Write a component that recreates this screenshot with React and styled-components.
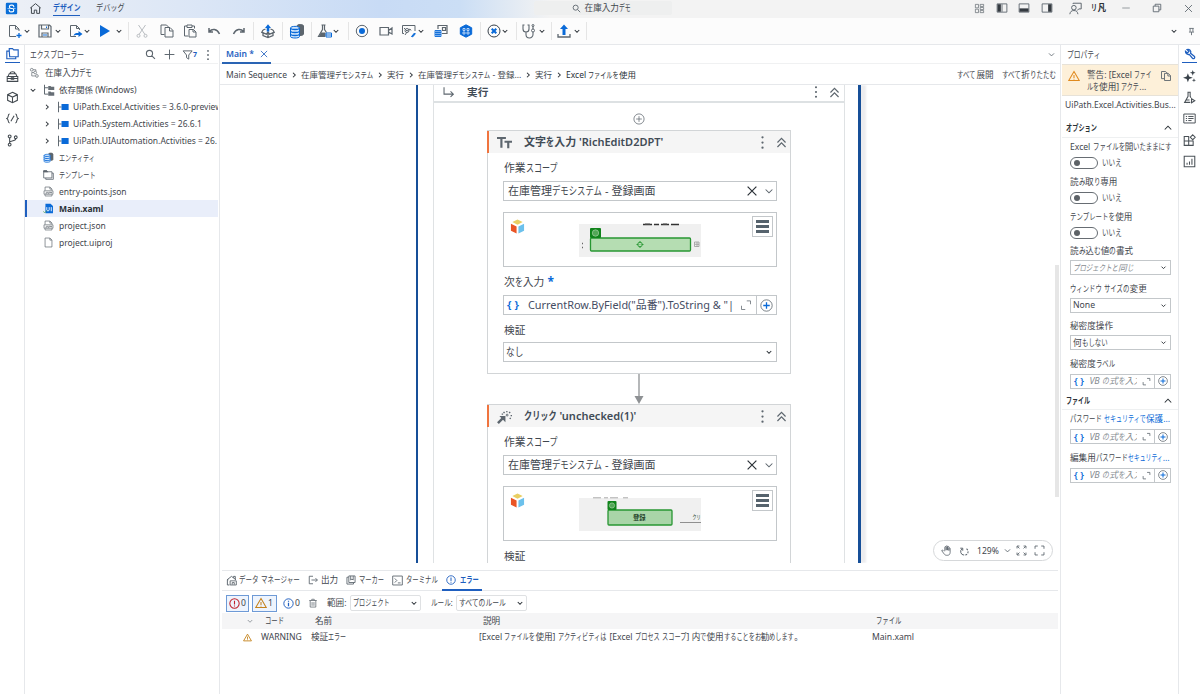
import React from 'react'
import styled, { createGlobalStyle } from 'styled-components'

const colors = {
	text: '#3f464d',
	dark: '#2b3137',
	grey: '#5d666e',
	blue: '#1f5fbf',
	bright: '#0a6ad8',
	line: '#e6e8eb',
	field: '#c3c7ca'
}

const GlobalStyle = createGlobalStyle`
	* {
		box-sizing: border-box;
	}

	body {
		margin: 0;
		overflow: hidden;
		background: #fff;
		color: ${colors.text};
		font: 9px/12px 'Noto Sans', 'Noto Sans CJK JP', sans-serif;
		white-space: nowrap;
	}

	svg {
		display: block;
		flex: none;
	}
`

/* Text */

const KanaRun = styled.span`
	display: inline-block;
	width: ${p => p.$n}em;
	margin-right: ${p => -p.$n * (1 - p.$k)}em;
	transform: scaleX(${p => p.$k});
	transform-origin: left;
`

const Label = styled.span`
	flex: none;
	white-space: pre;
	font-size: ${p => p.$size || 8.6}px;
	font-weight: ${p => p.$weight || 400};
	color: ${p => p.$color || 'inherit'};
	letter-spacing: ${p => p.$ls || 0}px;
	font-style: ${p => (p.$italic ? 'italic' : 'normal')};
	margin-left: ${p => p.$left || 0}px;
`

// kana are set narrower than kanji, the way UI fonts do it
const Text = ({ children, k = 0.74, ...rest }) => (
	<Label {...rest}>
		{children.split(/([\u3040-\u30ff]+)/).map((part, i) =>
			i % 2 ? (
				<KanaRun key={i} $n={part.length} $k={k}>
					{part}
				</KanaRun>
			) : (
				part
			)
		)}
	</Label>
)

/* Icons */

const Svg = styled.svg`
	width: ${p => p.$size || 16}px;
	height: ${p => p.$size || 16}px;
	fill: none;
	stroke: ${p => p.$color || colors.grey};
	stroke-width: ${p => p.$stroke || 1};
	margin-left: ${p => p.$left || 0}px;
	transform: ${p => (p.$turn ? `rotate(${p.$turn}deg)` : 'none')};
`

const B = colors.bright

const shapes = {
	logo: (
		<>
			<rect x="1" y="1" width="14" height="14" rx="1.5" fill="#0b6fd8" stroke="none" />
			<path d="M10.8 6.500V5.500a2 2 0 0 0-2-1.700H7.500a2.100 2.100 0 0 0 0 4.200h1.200a2.100 2.100 0 0 1 0 4.200H7.200a2 2 0 0 1-2-1.700V9.500" stroke="#fff" strokeWidth="1.4" />
			<path d="M3 8h3M10 8h3" stroke="#9fd0ff" />
		</>
	),
	home: <path d="M1.500 7.500 8 2l6.500 5.500M3 6.500V14h3.500v-4h3v4H13V6.500" />,
	chevron: <path d="M3.500 6 8 10.500 12.500 6" />,
	wide: <path d="M1.500 5 8 11.500 14.500 5" />,
	double: <path d="M3 8 8 3l5 5M3 13.500l5-5 5 5" />,
	close: <path d="m3 3 10 10M13 3 3 13" />,
	plus: <path d="M8 2v12M2 8h12" />,
	search: <path d="M6.500 2a4.500 4.500 0 1 0 0 9 4.500 4.500 0 0 0 0-9M10 10l4.500 4.500" />,
	dots: (
		<g fill={colors.grey} stroke="none">
			<circle cx="8" cy="2.500" r="1.200" />
			<circle cx="8" cy="8" r="1.200" />
			<circle cx="8" cy="13.500" r="1.200" />
		</g>
	),
	newFile: (
		<>
			<path d="M12 8V6L8.500 2.500H2.500v11H9M8.500 2.500V6H12" />
			<path d="M12 10v5M9.500 12.500h5" stroke={B} strokeWidth="1.300" />
		</>
	),
	save: (
		<>
			<path d="M2 2h10.500L14 3.500V14H2zM4.500 2v4h7V2M5 14v-4h6v4" strokeWidth="1.200" />
			<path d="M6 12h4M9.500 3.500V5" stroke={B} />
		</>
	),
	exportFile: (
		<>
			<path d="M11.500 7V5.500L8.500 2.500H2.500v11H8M8.500 2.500v3h3" />
			<path d="M5.500 13c.5-2.500 2-3 5-3V8l4 3-4 3v-2c-2.500-.2-4 0-5 1Z" fill={B} stroke="none" />
		</>
	),
	play: <path d="M3 2 13 8 3 14Z" fill={B} stroke="none" />,
	cut: (
		<g stroke="#b9bdc1">
			<path d="M4.500 2 11 11.500M11.500 2 5 11.500" />
			<circle cx="4.500" cy="12.800" r="1.500" />
			<circle cx="11.500" cy="12.800" r="1.500" />
		</g>
	),
	copy: <path d="M5.500 11.500h-3.500v-9.500h5.500l2 2M6 4.500h5l3 3V14H6zM10.500 4.500V8H14" />,
	paste: <path d="M6 13H2.500V3H5M10 3h2.500v2.500M5 2h5v2.500H5zM7 6.500h4.500L14 9v5H7zM11 6.500V9h3" />,
	undo: <path d="M3 5v4h4M3.300 8.700C6 5.500 11 5.500 13.500 11" strokeWidth="1.500" />,
	redo: <path d="M13 5v4H9M12.700 8.700C10 5.500 5 5.500 2.500 11" strokeWidth="1.500" />,
	box: (
		<>
			<path d="M3 9v3.500L8 14.500l5-2V9M8 10v4.500M3 7 1.800 9.300 6.500 11.200 8 9l1.500 2.200 4.700-1.900L13 7M3 7l2.500-1M13 7l-2.500-1" strokeWidth="1.300" />
			<path d="M8 1.300 11 5H9.300V8.500H6.700V5H5Z" fill={B} stroke="none" />
		</>
	),
	database: (
		<>
			<path d="M8 3c0-2 6.500-2 6.500 0v8c0 1-2 1.500-3.500 1.500" fill={colors.grey} />
			<path d="M1.500 5c0-2.200 9-2.200 9 0v8.500c0 2-9 2-9 0z" fill="#cfe4fb" stroke={B} />
			<path d="M1.500 5c0 2 9 2 9 0M1.500 8c0 2 9 2 9 0M1.500 11c0 2 9 2 9 0" stroke={B} strokeWidth="1.300" />
		</>
	),
	flask: (
		<>
			<path d="M4.500 2h4M5.500 2v4.500L1.500 13.500H8M7.500 2v4.500l2 3" strokeWidth="1.200" />
			<path d="M4 9.500h4.500v4H2Z" fill={colors.grey} stroke="none" />
			<path d="M9 10h5.500v4H9zM9 12h5.500" stroke={B} fill="#fff" />
		</>
	),
	record: (
		<>
			<circle cx="8" cy="8" r="5.700" />
			<circle cx="8" cy="8" r="3" fill={B} stroke="none" />
		</>
	),
	camera: <path d="M2 4.500h8.500v7.500H2zM10.500 7.500l3.500-2.500v6L10.500 9" strokeWidth="1.200" />,
	screen: (
		<>
			<path d="M3 10.500H1.500v-8h12.500V8M4 12l2-3M3 5l3 3 3-2 1 1.500" />
			<circle cx="6" cy="7.500" r="2" />
			<path d="m10.500 13.500 3-3.500.8.800-2.500 3Z" fill={B} stroke={B} />
		</>
	),
	scraping: (
		<>
			<path d="M5 6V2.500h9v8H9M9.500 4.500h3v3h-3z" strokeWidth="1.200" />
			<path d="M2 7.500h6v6H2zM2 9.500h6M2 11.500h6M4 7.500v6M6 7.500v6" fill="#cfe4fb" stroke={B} strokeWidth=".9" />
		</>
	),
	hex: (
		<>
			<path d="m8 1.800 5.700 3v6.400L8 14.200l-5.700-3V4.800Z" fill={B} stroke={B} strokeLinejoin="round" />
			<path d="M5 5.500h2v2H5zM9 5.500h2v2H9zM5 9h2v2H5zM9 9h2v2H9z" stroke="#d5e7fb" strokeWidth=".8" />
		</>
	),
	stop: (
		<>
			<circle cx="8" cy="8" r="6" stroke="#37404a" />
			<path d="m5.700 5.700 4.600 4.600m0-4.600-4.600 4.600" stroke={B} strokeWidth="2" />
		</>
	),
	steth: (
		<>
			<path d="M3.500 2H2v4a3 3 0 0 0 6 0V2H6.500M5 9v2.500a3.500 3.500 0 0 0 7 0V9M12 6V3" strokeWidth="1.100" />
			<circle cx="12" cy="7.500" r="1.500" />
			<circle cx="12" cy="2.500" r="1" />
		</>
	),
	upload: (
		<>
			<path d="M2 11v3h12V11" strokeWidth="1.300" />
			<path d="M8 1.500 12 6H9.500V12h-3V6H4Z" fill={B} stroke="none" />
		</>
	),
	layout: <path d="M2 2h4.500v5H2zM2 9h4.500v5H2zM9 2h5v3H9zM9 6.500h5v3H9zM9 11h5v3H9z" />,
	panelLeft: (
		<>
			<path d="M1.500 2.500h13v11h-13zM8 3v10" strokeWidth="1.200" />
			<path d="M2 3h4.500v10H2z" fill="#343a40" stroke="none" />
		</>
	),
	panelBottom: (
		<>
			<path d="M1.500 2.500h13v11h-13z" strokeWidth="1.200" />
			<path d="M2 8.500h12V13H2z" fill="#343a40" stroke="none" />
		</>
	),
	panelRight: (
		<>
			<path d="M1.500 2.500h13v11h-13z" strokeWidth="1.200" />
			<path d="M9.500 3H14v10H9.500z" fill="#343a40" stroke="none" />
		</>
	),
	feedback: (
		<>
			<circle cx="6" cy="7" r="2.800" />
			<path d="M1 15c.5-3 2-4.500 5-4.500s4.500 1.500 5 4.500M5 2.500V1.500h10v7h-3L10 10.500" />
		</>
	),
	minimize: <path d="M2 8h12" />,
	restore: <path d="M2 5h9v9H2zM5 5V2h9v9h-3" />,
	pin: <path d="M4 2.500h8M5.500 2.500v6M10.500 2.500v6M3.500 9h9M8 9v5.500" strokeWidth="1.500" />,
	folders: <path d="M4 4.500V2h4l1.500 1.500H15v8.500H4.500zM4 5H1v9.500h11V12.500" />,
	toolbox: <path d="M5 4.500c0-3 6-3 6 0M2.500 8 4 4.500h8L13.500 8M1.500 8h13v2.500h-13zM1.500 10.500h13V14h-13zM6.500 9.500h3v2h-3z" />,
	cube: <path d="m8 1.500 6 3v7l-6 3-6-3v-7zM2 4.500l6 3 6-3M8 7.500v7" />,
	snippet: <path d="M4.500 2.500C1.500 2.500 4 7 1 8c3 1 .5 5.500 3.500 5.500M11.500 2.500c3 0 .5 4.500 3.500 5.500-3 1-.5 5.500-3.500 5.500M10 4.500l-4 7" />,
	branch: (
		<>
			<circle cx="4.500" cy="3" r="1.700" />
			<circle cx="4.500" cy="13" r="1.700" />
			<circle cx="12" cy="4" r="1.700" />
			<path d="M4.500 4.700v6.600M4.500 10c0-2 7.500-1 7.500-4.300" />
		</>
	),
	filter: <path d="M1.500 2.500h12L9 8v5.500l-3-2V8Z" />,
	project: (
		<>
			<circle cx="4" cy="4" r="2" />
			<circle cx="9" cy="8" r="2" />
			<circle cx="11.500" cy="13" r="2" />
			<path d="M6 4h4v2M7 8H4v5h5" />
		</>
	),
	deps: (
		<>
			<path d="M2 1v12.500h5M2 5h5" strokeWidth="1.300" />
			<path d="M7 2.500h3l1 1h4V8H7zM7 10h3l1 1h4v4.500H7z" fill="#666e75" stroke="none" />
		</>
	),
	pack: (
		<>
			<path d="M2 1v14M2 8h4" strokeWidth="1.300" />
			<path d="M6 4h9.500v8H6z" fill={B} stroke="none" />
		</>
	),
	folder: (
		<>
			<path d="M1 2.500h4.500L7 4h6v9H1zM13 6h2v9H4v-2" strokeWidth="1.200" />
			<path d="M1 2.500h4.500L7 4.500H1z" fill={colors.grey} />
		</>
	),
	json: (
		<>
			<path d="M3 6.500v-5h7l3 3v2M3 12.500v2h10v-2M10 1.500v3h3" />
			<path d="M1.500 7h13v5h-13z" />
			<path d="M3.500 10.500h2v-2M7 8.500v2h2v-2M10.500 10.500v-2l2 2v-2" />
		</>
	),
	xaml: (
		<>
			<path d="M3.500 1H11l3.500 3.500V15h-11z" fill={B} stroke="none" />
			<path d="M5.500 6v4c0 2 3.500 2 3.500 0V6M12 6v6" stroke="#fff" strokeWidth="1.300" />
			<path d="m.5 12 2 2.500 3-4" stroke="#55a35b" />
		</>
	),
	file: <path d="M3 1.500h7l3 3v10H3zM10 1.500v3h3" />,
	enter: <path d="M2.500 1.500v8.500H14M10.500 6.500 14 10l-3.500 3.500" strokeWidth="1.300" />,
	typeInto: (
		<g strokeWidth="2.300">
			<path d="M0 3.200h9.500M4.700 3v10.500" />
			<path d="M8 7.200h8M12 7v7" />
		</g>
	),
	click: (
		<>
			<path d="m1 15 5-5" strokeWidth="2.600" />
			<path d="M2.500 7.500H9V14Z" fill={colors.grey} stroke="none" />
			<path d="M8 4.500 7 3M10.500 3.500V2M13 4.500 14 3M14.500 7H16M13.500 9.500l1.200 1M6.500 5.500 5 5.500" strokeWidth="1.400" />
			<circle cx="10.800" cy="6.500" r="1" />
		</>
	),
	addCircle: (
		<>
			<circle cx="8" cy="8" r="6.800" />
			<path d="M8 4.200v7.600M4.200 8h7.600" />
		</>
	),
	addBlue: (
		<>
			<circle cx="8" cy="8" r="7" />
			<path d="M8 4v8M4 8h8" stroke={B} strokeWidth="1.600" />
		</>
	),
	expand: <path d="M9 2.500h5V7M2 9v5h5" />,
	app: (
		<g stroke="none">
			<path d="m8 .5 5.500 2.800L8 6.200 2.500 3.300Z" fill="#e9cf63" />
			<path d="m1 5 6 3v7.500l-6-3Z" fill="#ea5526" />
			<path d="m15 5-6 3v7.500l6-3Z" fill="#6cc1ec" />
		</g>
	),
	warning: (
		<>
			<path d="M8 2 15 14H1Z" />
			<path d="M8 6.500v4M8 11.500v1.200" />
		</>
	),
	alert: (
		<>
			<circle cx="8" cy="8" r="6.800" />
			<path d="M8 4v5.500M8 10.800v1.500" strokeWidth="1.600" />
		</>
	),
	info: (
		<>
			<circle cx="8" cy="8" r="6.800" />
			<path d="M8 7v5M8 4v1.500" strokeWidth="1.800" />
		</>
	),
	trash: <path d="M2 4h12M6 4V2h4v2M3.500 4v10.500h9V4M6.500 6.500v6M9.500 6.500v6" />,
	dataManager: (
		<>
			<path d="M3.500 7H2v7.500h3M1.500 7 8 2l6.500 5M11 4V2h2.500v4" strokeWidth="1.400" />
			<path d="M6 8.500h9v6H6zM9 14v-3h3v3" strokeWidth="1.300" />
		</>
	),
	output: <path d="M8 2H2v12h6M5.500 8H15M12 5l3 3-3 3" strokeWidth="1.400" />,
	marker: <path d="M4 3.500H1.500v11H12V12M4.500 1.500h10V12h-10zM7.500 1.500V8L9.500 6.500 11.500 8V1.500" strokeWidth="1.400" />,
	terminal: <path d="M1 1.500h14v13H1zM4 5l3 3-3 3M8.500 11.500h4" strokeWidth="1.300" />,
	hand: <path d="M4 9 2.500 7.500c-1-.5-1.800.3-1.200 1.200L5 13.500c1 1.300 2 1.500 4 1.500 3 0 4-1.500 4.300-4V5c0-1.200-1.800-1.200-1.800 0v3-5c0-1.200-2-1.200-2 0v4.500V2c0-1.200-2-1.200-2 0v5.500V3.200C7.500 2 5.500 2 5.500 3.200V9" />,
	rotate: (
		<>
			<path d="M12 4.500A5.500 5.500 0 0 1 8 14.500" strokeDasharray="3 1.800" strokeWidth="1.700" />
			<path d="M8 14.500A5.500 5.500 0 0 1 5 4.500M2 3.500h4v4" strokeWidth="1.600" />
		</>
	),
	fit: <path d="M1.500 5V1.500H5M11 1.500h3.500V5M14.500 11v3.500H11M5 14.500H1.500V11M2 2l3 3M14 2l-3 3M14 14l-3-3M2 14l3-3" strokeWidth="1.300" />,
	full: <path d="M1.500 5.500v-4h4M10.500 1.500h4v4M14.500 10.500v4h-4M5.500 14.500h-4v-4" strokeWidth="1.300" />,
	wrench: <path d="M14 4a3.800 3.800 0 0 1-5 4.800L5 13.600c-2 2-4-.7-2.600-2.300L7.500 7A3.900 3.900 0 0 1 11.500 2L9.500 4.500l2 2Z" transform="rotate(-90 8 8)" />,
	sparkles: (
		<g fill="#39424a" stroke="none">
			<path d="m6 4 1.500 4L12 9.500 7.500 11 6 15l-1.500-4L0 9.500 4.500 8Z" />
			<path d="m12 0 .9 2.600L15.500 3.500l-2.600.9L12 7l-.9-2.600-2.600-.9 2.600-.9ZM13.500 10l.6 1.900 1.900.6-1.900.6-.6 1.900-.6-1.900-1.900-.6 1.900-.6Z" />
		</g>
	),
	lab: (
		<>
			<path d="M5.500 1.500h4M6.200 1.500v5L2 14h7M8.800 1.500v5l1 1.800M4 11h4" strokeWidth="1.300" />
			<path d="m10.500 9.500 4 2.500-4 2.500z" strokeWidth="1.300" />
		</>
	),
	list: <path d="M1 2.500h14v11H1zM3.500 5.500H5M3.500 8H5M3.500 10.500H5M6.500 5.500H13M6.500 8H13M6.500 10.500h4" strokeWidth="1.200" />,
	widgets: <path d="M1.500 3H7v5.500H1.500zM1.500 8.500H7V14H1.500zM7 8.500h5.500V14H7zM12 1l3 3-3 3-3-3z" strokeWidth="1.300" />,
	chart: <path d="M1.500 1.500h13v13h-13zM5 12V9.500M8 12V8M11 12V4.500" strokeWidth="1.300" />
}

const Icon = ({ name, ...rest }) => (
	<Svg viewBox="0 0 16 16" {...rest}>
		{shapes[name]}
	</Svg>
)

/* Window frame */

const Window = styled.div`
	display: flex;
	flex-direction: column;
	width: 1200px;
	height: 694px;
	overflow: hidden;
`

const TitleBar = styled.header`
	display: flex;
	align-items: center;
	height: 18px;
	padding: 0 6px 2px 5px;
	background: linear-gradient(90deg, #edf0f6 0, #dbe6f6 200px, #c8dbf5 380px, #cbdef5 460px, #f3f3f3 550px);
`

const MenuItem = styled.div`
	height: 16px;
	padding-top: 2px;
	margin-left: ${p => p.$left}px;
	border-bottom: ${p => (p.$active ? `1px solid ${colors.blue}` : 'none')};
`

const SearchBox = styled.div`
	display: flex;
	align-items: center;
	gap: 4px;
	width: 138px;
	height: 14px;
	margin-left: 409px;
	padding-left: 38px;
	border-radius: 2px;
	background: #eeefef;
`

const TitleActions = styled.div`
	display: flex;
	align-items: center;
	margin-left: auto;
`

const ToolBar = styled.div`
	display: flex;
	align-items: center;
	height: 27px;
	padding-right: 4px;
	background: #fcfcfc;
	border-bottom: 1px solid ${colors.line};
`

const Separator = styled.i`
	width: 1px;
	height: 18px;
	margin-left: ${p => p.$left}px;
	background: #e5e5e5;
`

const ToolBarEnd = styled.div`
	display: flex;
	align-items: center;
	gap: 9px;
	margin-left: auto;
`

const Body = styled.div`
	display: flex;
	flex: 1;
	min-height: 0;
`

/* Side rails */

const Rail = styled.nav`
	display: flex;
	flex-direction: column;
	align-items: center;
	flex: none;
	width: ${p => p.$width}px;
	border-${p => p.$side}: 1px solid ${colors.line};
`

const RailItem = styled.div`
	display: flex;
	justify-content: center;
	align-items: center;
	width: 15px;
	height: ${p => (p.$active ? 18 : 21.2)}px;
	margin-bottom: ${p => (p.$active ? 3 : 0)}px;
	border-bottom: ${p => (p.$active ? `1.5px solid ${colors.blue}` : 'none')};
`

/* Explorer */

const Explorer = styled.aside`
	flex: none;
	width: 193px;
`

const PanelHeader = styled.div`
	display: flex;
	align-items: center;
	height: 19px;
	padding: 1px 0 0 5px;
	border-bottom: 1px solid ${p => (p.$plain ? 'transparent' : '#f0f1f2')};
`

const PanelTools = styled.div`
	display: flex;
	align-items: center;
	margin-left: auto;
	padding-right: 4px;
`

const TreeRow = styled.div`
	display: flex;
	align-items: center;
	gap: ${p => p.$gap || 5}px;
	height: 17px;
	padding-left: ${p => p.$indent - (p.$active ? 2 : 0)}px;
	overflow: hidden;
	border-left: ${p => (p.$active ? `2px solid ${colors.blue}` : 'none')};
	background: ${p => (p.$active ? '#e9eefa' : 'none')};
`

/* Centre */

const Centre = styled.main`
	display: flex;
	flex-direction: column;
	flex: none;
	width: 842px;
	margin-left: 1px;
	border-left: 1px solid ${colors.line};
	border-right: 1px solid ${colors.line};
`

const TabBar = styled.div`
	display: flex;
	align-items: center;
	justify-content: space-between;
	height: 19px;
	padding: 1px 4px 0 2px;
	border-bottom: 1px solid #f0f1f2;
`

const DocTab = styled.div`
	display: flex;
	align-items: center;
	gap: 5px;
	width: 49px;
	height: 19px;
	padding-left: 4px;
	border-bottom: 2px solid #2a64b4;
`

const Breadcrumb = styled.div`
	display: flex;
	align-items: center;
	height: 21px;
	padding: 1px 4px 0 6px;
	border-bottom: 1px solid ${colors.line};
`

const BreadcrumbEnd = styled.div`
	display: flex;
	gap: 8px;
	margin-left: auto;
`

const Canvas = styled.section`
	position: relative;
	height: 478px;
	overflow: hidden;
`

const Outer = styled.div`
	width: 445px;
	height: 478px;
	margin-left: 196px;
	padding: 0 13px 0 15px;
	border: solid #164f98;
	border-width: 0 3px 0 2px;
	box-shadow: 5px 0 2px #ececee;
`

const Inner = styled.div`
	display: flex;
	flex-direction: column;
	align-items: center;
	height: 478px;
	border: solid #dfe2e4;
	border-width: 0 1px;
`

const InnerHeader = styled.div`
	display: flex;
	align-items: center;
	align-self: stretch;
	height: 18px;
	padding: 0 3px 2px 8px;
	margin-bottom: 10px;
	border-bottom: 2px solid #dde1e3;
`

const Card = styled.article`
	flex: none;
	width: 304px;
	height: 244px;
	border: 1px solid #d2d5d7;
`

const CardHeader = styled.div`
	display: flex;
	align-items: center;
	height: 22px;
	margin-left: -1px;
	padding: 0 2px 0 8px;
	border-left: 2px solid #f0743e;
	background: #f5f5f5;
`

const HeaderTools = styled.div`
	display: flex;
	align-items: center;
	gap: 5px;
	margin-left: auto;
`

const CardBody = styled.div`
	padding: 0 13px 0 15px;
`

const FieldLabel = styled.div`
	display: flex;
	align-items: center;
	gap: 4px;
	height: ${p => p.$height || 27}px;
	padding: ${p => p.$top || 0}px 0 0 1px;
	line-height: 14px;
`

const Field = styled.div`
	display: flex;
	align-items: center;
	height: ${p => p.$height || 20}px;
	padding: 0 3px;
	border: 1px solid ${colors.field};
	overflow: hidden;
	line-height: ${p => (p.$height ? 12 : 16)}px;
`

const FieldEnd = styled.div`
	display: flex;
	align-items: center;
	align-self: stretch;
	gap: ${p => p.$gap || 3}px;
	margin-left: auto;
`

const SelectEnd = styled(FieldEnd)`
	gap: 4px;
	margin-right: -2px;
`

const AddButton = styled.div`
	display: flex;
	align-items: center;
	justify-content: center;
	align-self: stretch;
	width: ${p => p.$width || 20}px;
	margin-right: -3px;
	border-left: 1px solid ${colors.field};
`

const Preview = styled.div`
	display: grid;
	grid-template-columns: 75px 122px 1fr;
	height: 55px;
	margin: 11px 0 1px;
	border: 1px solid ${colors.field};
`

const PreviewIcon = styled.div`
	padding: 6px;
`

const PreviewMenu = styled.div`
	display: flex;
	flex-direction: column;
	justify-content: center;
	gap: 2px;
	justify-self: end;
	width: 21px;
	height: 21px;
	margin: 3px 3px 0 0;
	padding: 0 3px;
	border: 1px solid ${colors.field};

	& > i {
		height: 3px;
		background: #56636d;
	}
`

const Shot = styled.svg`
	width: 122px;
	height: 34px;
	margin-top: 10px;
`

const Connector = styled.svg`
	width: 10px;
	height: ${p => p.$height}px;
`

const ScrollThumb = styled.div`
	position: absolute;
	right: 1px;
	top: 180px;
	width: 4px;
	height: 232px;
	background: #e6e6e6;
`

const ZoomBar = styled.div`
	position: absolute;
	right: 7px;
	bottom: 2px;
	display: flex;
	align-items: center;
	width: 120px;
	height: 21px;
	padding: 0 7px;
	border: 1px solid #d6d8da;
	border-radius: 11px;
	background: #fff;
`

/* Bottom panel */

const BottomPanel = styled.section`
	margin-top: 7px;
	padding: 0 2px;
`

const BottomTabs = styled.div`
	display: flex;
	height: 21px;
	border-top: 1px solid ${colors.line};
	border-bottom: 1px solid ${colors.line};
`

const BottomTab = styled.div`
	display: flex;
	align-items: center;
	gap: ${p => p.$gap || 3}px;
	width: ${p => p.$width}px;
	height: 20px;
	padding-left: 4px;
	color: ${p => (p.$active ? colors.blue : 'inherit')};
	border-bottom: 2px solid ${p => (p.$active ? colors.blue : 'transparent')};
`

const FilterRow = styled.div`
	display: flex;
	align-items: center;
	height: 22px;
	padding: 3px 4px 1px;
`

const Counter = styled.div`
	display: flex;
	align-items: center;
	gap: 1px;
	width: ${p => p.$width}px;
	height: 17px;
	margin-right: 3px;
	padding-left: 2px;
	border: 1px solid ${p => (p.$on ? '#6e9ad6' : 'transparent')};
	background: ${p => (p.$on ? '#eef4fd' : 'none')};
`

const Dropdown = styled.div`
	display: flex;
	align-items: center;
	justify-content: space-between;
	width: 71px;
	height: 16px;
	margin-left: 3px;
	padding: 0 2px;
	border: 1px solid #dfe1e3;
	border-radius: 2px;
`

const TableRow = styled.div`
	display: grid;
	grid-template-columns: 39px ${p => (p.$head ? '54px 168px 393px' : '50px 168px 393px')} 1fr;
	align-items: center;
	height: 16px;
	padding-right: 1px;
	background: ${p => (p.$head ? '#f5f5f6' : 'none')};

	& > svg {
		justify-self: ${p => (p.$head ? 'center' : 'end')};
		margin-right: ${p => (p.$head ? -16 : 9)}px;
	}

	& > span:nth-child(2) {
		margin-left: ${p => (p.$head ? 4 : 0)}px;
	}
`

/* Properties */

const Properties = styled.aside`
	flex: none;
	width: 117px;
	padding-left: 1px;
`

const Banner = styled.div`
	display: flex;
	height: 32px;
	padding: 5px 6px 0 6px;
	background: #fdf0d9;
	border: solid #e7e2d8;
	border-width: 1px 0;
`

const BannerText = styled.div`
	width: 74px;
	margin: -1px 0 0 7px;
`

const TypeName = styled.div`
	height: 18px;
	padding: 3px 0 0 3px;
`

const Group = styled.div`
	display: flex;
	align-items: center;
	justify-content: space-between;
	height: ${p => p.$height}px;
	padding: ${p => p.$top || 0}px 6px 0 4px;
	border-bottom: 1px solid #eef0f1;
`

const Prop = styled.div`
	height: ${p => p.$height}px;
	padding: 3px 7px 0 8px;
`

const PropLabel = styled.div`
	height: 14px;
	width: 102px;
	display: flex;
	gap: 2px;
`

const ToggleRow = styled.div`
	display: flex;
	align-items: center;
	gap: 4px;
	height: 16px;
`

const Toggle = styled.i`
	display: flex;
	align-items: center;
	width: 28px;
	height: 12px;
	padding-left: 3px;
	border: 1px solid #676d73;
	border-radius: 6px;

	&::after {
		content: '';
		width: 6px;
		height: 6px;
		border-radius: 50%;
		background: #5d6267;
	}
`

const PropField = styled(Field)`
	width: 101px;
	margin-top: ${p => p.$top || 1}px;
	padding: 0 3px 0 2px;
`

const Clip = styled.div`
	width: ${p => p.$width}px;
	overflow: hidden;
`

const Caret = props => <Icon name="chevron" $size={8} $stroke={2.1} $color={colors.dark} {...props} />

const tools = [
	['newFile', 7, 0],
	['save', 6, 1],
	['exportFile', 6, -1],
	['play', 6, 2],
	['|', 5],
	['cut', 5],
	['copy', 9],
	['paste', 7],
	['undo', 8],
	['redo', 9],
	['|', 6],
	['box', 6],
	['|', 6],
	['database', 6],
	['|', 6],
	['flask', 5, -1],
	['|', 8],
	['record', 5],
	['camera', 8],
	['screen', 7, 0],
	['scraping', 8],
	['hex', 9],
	['|', 6],
	['stop', 5, -1],
	['|', 7],
	['steth', 4, 1],
	['|', 5],
	['upload', 4, 1],
	['|', 5]
]

const packages = [
	'UiPath.Excel.Activities = 3.6.0-preview',
	'UiPath.System.Activities = 26.6.1',
	'UiPath.UIAutomation.Activities = 26.'
]

const files = [
	['database', 'エンティティ'],
	['folder', 'テンプレート'],
	['json', 'entry-points.json'],
	['xaml', 'Main.xaml'],
	['json', 'project.json'],
	['file', 'project.uiproj']
]

const crumbs = [
	'Main Sequence',
	'在庫管理デモシステム',
	'実行',
	'在庫管理デモシステム - 登録...',
	'実行',
	'Excel ファイルを使用'
]

const ActivityCard = ({ icon, title, shot, children }) => (
	<Card>
		<CardHeader>
			<Icon name={icon} $size={15} />
			<Text $size={11} $weight={600} $left={12} $color="#414b56">
				{title}
			</Text>
			<HeaderTools>
				<Icon name="dots" $size={15} />
				<Icon name="double" $size={13} $stroke={1.5} />
			</HeaderTools>
		</CardHeader>
		<CardBody>
			<FieldLabel $height={28} $top={1}>
				<Text $size={10.800}>作業スコープ</Text>
			</FieldLabel>
			<Field>
				<Text $size={11} k={0.76} $left={1}>
					在庫管理デモシステム - 登録画面
				</Text>
				<SelectEnd>
					<Icon name="close" $size={14} $color={colors.dark} $stroke={1.4} />
					<Icon name="chevron" $size={12} $stroke={1.4} />
				</SelectEnd>
			</Field>
			<Preview>
				<PreviewIcon>
					<Icon name="app" $size={15} />
				</PreviewIcon>
				{shot}
				<PreviewMenu>
					<i />
					<i />
					<i />
				</PreviewMenu>
			</Preview>
			{children}
		</CardBody>
	</Card>
)

const inputShot = (
	<Shot viewBox="0 0 122 34">
		<rect y="1" width="122" height="33" fill="#f0f0f0" />
		<path d="M64 1.500h9M75 1.500h5M82 1.500h8M92 1.500h8" stroke="#333" strokeWidth="1.500" />
		<path d="M66 .8h5M84 .8h4" stroke="#777" />
		<rect x="11.500" y="15" width="100" height="13" rx="1" fill="#b5ddb2" stroke="#279632" strokeWidth="1.300" />
		<rect x="11" y="5" width="11" height="10" rx="1" fill="#11841c" />
		<circle cx="16.500" cy="10" r="3.200" fill="#53a757" stroke="#a3cfa4" strokeWidth=".7" />
		<g fill="none" stroke="#279632" strokeWidth=".9">
			<circle cx="61" cy="21.500" r="2.300" />
			<path d="M61 18v2M61 23v2M57.500 21.500h2M62.500 21.500h2M60.700 21.500h.6" />
		</g>
		<path d="M3 20.500h1M3 24.500h1" stroke="#666" strokeWidth="1.300" />
		<path d="M115.500 19h4.500v4.500h-4.500zM116 21.300h4M118 19v4.500" fill="none" stroke="#999" strokeWidth=".8" />
	</Shot>
)

const SmallText = styled.text`
	font-size: ${p => p.$size}px;
	font-weight: ${p => p.$weight || 400};
	fill: #26452b;
	stroke: none;
`

const clickShot = (
	<Shot viewBox="0 0 122 34">
		<rect y="1" width="122" height="33" fill="#f0f0f0" />
		<path d="M14 .8h8M25 .8h4M31 .8h8M44 .8h5" stroke="#aaa" />
		<rect x="29" y="13" width="64" height="15" rx="1" fill="#a9d5a8" stroke="#279632" strokeWidth="1.300" />
		<rect x="28.500" y="4" width="9" height="9" rx="1" fill="#11841c" />
		<circle cx="33" cy="8.500" r="2.600" fill="#53a757" stroke="#a3cfa4" strokeWidth=".7" />
		<SmallText x="54" y="22.800" $size={6.300} $weight={700}>
			登録
		</SmallText>
		<path d="M101 25.500h21" stroke="#777" strokeWidth=".8" />
		<SmallText x="113.500" y="22" $size={6} textLength="8" lengthAdjust="spacingAndGlyphs">
			クリ
		</SmallText>
	</Shot>
)

const VbInput = () => (
	<PropField $height={15} $top={2}>
		<Text $weight={600} $color={B} $size={9.5} $left={1} $ls={2.5}>
			{'{}'}
		</Text>
		<Clip $width={51}>
			<Text $italic $size={9} k={0.76} $left={3} $color="#858b90">
				VB の式を入力
			</Text>
		</Clip>
		<FieldEnd $gap={3}>
			<Icon name="expand" $size={9} $stroke={1.4} />
			<AddButton $width={16}>
				<Icon name="addBlue" $size={10} $stroke={1.2} />
			</AddButton>
		</FieldEnd>
	</PropField>
)

const Choice = ({ italic, children }) => (
	<PropField $height={15}>
		<Text $size={8.700} $italic={italic} $color={italic ? '#858b90' : null}>
			{children}
		</Text>
		<FieldEnd>
			<Caret $size={7} $left={0} />
		</FieldEnd>
	</PropField>
)

const App = () => (
	<Window>
		<GlobalStyle />
		<TitleBar>
			<Icon name="logo" $size={13} />
			<Icon name="home" $size={13} $left={11} $color="#3f464d" $stroke={1.2} />
			<MenuItem $left={10.500} $active>
				<Text $weight={600} $color={colors.blue} k={0.8}>
					デザイン
				</Text>
			</MenuItem>
			<MenuItem $left={16}>
				<Text k={0.83}>デバッグ</Text>
			</MenuItem>
			<SearchBox>
				<Icon name="search" $size={9} $stroke={1.6} />
				<Text k={0.68}>在庫入力デモ</Text>
			</SearchBox>
			<TitleActions>
				<Icon name="layout" $size={11} />
				<Icon name="panelLeft" $size={12} $left={11} />
				<Icon name="panelBottom" $size={12} $left={10} />
				<Icon name="panelRight" $size={12} $left={11} />
				<Icon name="feedback" $size={13} $left={16} $stroke={1.2} />
				<Text $weight={600} $left={9} $color={colors.dark} k={0.7}>
					リ凡
				</Text>
				<Icon name="minimize" $size={10} $left={15} />
				<Icon name="restore" $size={10} $left={21} $stroke={1.4} />
				<Icon name="close" $size={11} $left={21} $stroke={1.3} />
			</TitleActions>
		</TitleBar>

		<ToolBar>
			{tools.map(([name, left, caret], i) =>
				name === '|' ? (
					<Separator key={i} $left={left} />
				) : (
					<React.Fragment key={i}>
						<Icon name={name} $left={left} />
						{caret !== undefined && <Caret $left={caret} />}
					</React.Fragment>
				)
			)}
			<ToolBarEnd>
				<Caret />
				<Icon name="pin" $size={9} />
			</ToolBarEnd>
		</ToolBar>

		<Body>
			<Rail $width={25} $side="right">
				<RailItem $active>
					<Icon name="folders" $size={13} $color={colors.blue} $stroke={1.4} />
				</RailItem>
				{['toolbox', 'cube', 'snippet', 'branch'].map(name => (
					<RailItem key={name}>
						<Icon name={name} $size={13} $color="#434a50" $stroke={1.3} />
					</RailItem>
				))}
			</Rail>

			<Explorer>
				<PanelHeader>
					<Text k={0.79}>エクスプローラー</Text>
					<PanelTools>
						<Icon name="search" $size={11} $stroke={1.6} />
						<Icon name="plus" $size={13} $left={7} $stroke={1.2} />
						<Icon name="filter" $size={12} $left={6} $stroke={1.3} />
						<Text $size={7} $weight={700} $left={-1} $color={colors.blue}>
							7
						</Text>
						<Icon name="dots" $size={12} $left={5} />
					</PanelTools>
				</PanelHeader>
				<TreeRow $indent={4}>
					<Icon name="project" $size={11} />
					<Text k={0.74}>在庫入力デモ</Text>
				</TreeRow>
				<TreeRow $indent={4} $gap={6}>
					<Caret />
					<Icon name="deps" $size={12} />
					<Text $size={8.5} $left={-2}>
						依存関係 (Windows)
					</Text>
				</TreeRow>
				{packages.map(name => (
					<TreeRow key={name} $indent={18} $gap={6}>
						<Caret $turn={-90} />
						<Icon name="pack" $size={12} />
						<Text $size={8.5} $left={-2}>
							{name}
						</Text>
					</TreeRow>
				))}
				{files.map(([icon, name]) => (
					<TreeRow key={name} $indent={18} $active={name === 'Main.xaml'}>
						<Icon name={icon} $size={11} />
						<Text
							$size={8.5}
							k={0.72}
							$weight={name === 'Main.xaml' ? 700 : 400}
							$color={name === 'Main.xaml' ? colors.dark : null}
						>
							{name}
						</Text>
					</TreeRow>
				))}
			</Explorer>

			<Centre>
				<TabBar>
					<DocTab>
						<Text $weight={600} $color={colors.blue}>
							Main *
						</Text>
						<Icon name="close" $size={10} $color={colors.blue} $stroke={1.3} />
					</DocTab>
					<Icon name="chevron" $size={9} $stroke={1.5} />
				</TabBar>
				<Breadcrumb>
					{crumbs.map((name, i) => (
						<React.Fragment key={i}>
							{i > 0 && <Caret $turn={-90} $left={3} />}
							<Text
								$size={8.5}
								k={i === 5 ? 0.72 : 0.75}
								$left={i ? 2.900 : 0}
								$color={i === 5 ? colors.dark : null}
							>
								{name}
							</Text>
						</React.Fragment>
					))}
					<BreadcrumbEnd>
						<Text>すべて展開</Text>
						<Text k={0.76}>すべて折りたたむ</Text>
					</BreadcrumbEnd>
				</Breadcrumb>

				<Canvas>
					<Outer>
						<Inner>
							<InnerHeader>
								<Icon name="enter" $size={13} />
								<Text $size={10.700} $weight={600} $left={12} $color="#414b56">
									実行
								</Text>
								<HeaderTools>
									<Icon name="dots" $size={14} />
									<Icon name="double" $size={13} $stroke={1.5} />
								</HeaderTools>
							</InnerHeader>
							<Icon name="addCircle" $size={12} />
							<Connector $height={5} />
							<ActivityCard icon="typeInto" title="文字を入力 'RichEditD2DPT'" shot={inputShot}>
								<FieldLabel>
									<Text $size={10.800}>次を入力</Text>
									<Text $size={12} $weight={700} $color={B} $left={-1}>
										*
									</Text>
								</FieldLabel>
								<Field>
									<Text $weight={600} $color={B} $size={11.500} $ls={3}>
										{'{}'}
									</Text>
									<Text $size={10.900} $left={6} $color="#454c63">
										CurrentRow.ByField("品番").ToString &amp; "|
									</Text>
									<FieldEnd $gap={4}>
										<Icon name="expand" $size={12} />
										<AddButton>
											<Icon name="addBlue" $size={13} />
										</AddButton>
									</FieldEnd>
								</Field>
								<FieldLabel $top={2}>
									<Text $size={10.700}>検証</Text>
								</FieldLabel>
								<Field>
									<Text $size={10.800} k={0.8} $left={-1}>
										なし
									</Text>
									<FieldEnd>
										<Caret />
									</FieldEnd>
								</Field>
							</ActivityCard>
							<Connector $height={30} viewBox="0 0 10 30">
								<path d="M5 0v24" stroke="#8e9194" strokeWidth="1.300" />
								<path d="M.5 22h9L5 30Z" fill="#8e9194" />
							</Connector>
							<ActivityCard icon="click" title="クリック 'unchecked(1)'" shot={clickShot}>
								<FieldLabel $height={28}>
									<Text $size={10.700}>検証</Text>
								</FieldLabel>
							</ActivityCard>
						</Inner>
					</Outer>
					<ScrollThumb />
					<ZoomBar>
						<Icon name="hand" $size={11} $stroke={1.2} />
						<Icon name="rotate" $size={10} $left={7} />
						<Text $left={8}>129%</Text>
						<Icon name="chevron" $size={9} $left={4} $stroke={1.6} />
						<Icon name="fit" $size={11} $left={4} />
						<Icon name="full" $size={11} $left={7} />
					</ZoomBar>
				</Canvas>

				<BottomPanel>
					<BottomTabs>
						<BottomTab $width={82} $gap={2}>
							<Icon name="dataManager" $size={11} />
							<Text k={0.76}>データ マネージャー</Text>
						</BottomTab>
						<BottomTab $width={38}>
							<Icon name="output" $size={10} />
							<Text>出力</Text>
						</BottomTab>
						<BottomTab $width={46}>
							<Icon name="marker" $size={10} />
							<Text k={0.73}>マーカー</Text>
						</BottomTab>
						<BottomTab $width={54}>
							<Icon name="terminal" $size={11} />
							<Text>ターミナル</Text>
						</BottomTab>
						<BottomTab $width={40} $gap={4} $active>
							<Icon name="alert" $size={10} $color={colors.blue} $stroke={1.4} />
							<Text k={0.73} $weight={600}>
								エラー
							</Text>
						</BottomTab>
					</BottomTabs>
					<FilterRow>
						<Counter $width={23} $on>
							<Icon name="alert" $size={11} $color="#c0202b" $stroke={1.5} />
							<Text>0</Text>
						</Counter>
						<Counter $width={25} $on>
							<Icon name="warning" $size={12} $color="#c4821c" $stroke={1.4} />
							<Text>1</Text>
						</Counter>
						<Counter $width={25}>
							<Icon name="info" $size={11} $color={colors.blue} $stroke={1.4} />
							<Text>0</Text>
						</Counter>
						<Icon name="trash" $size={10} $stroke={1.2} />
						<Text $left={9}>範囲:</Text>
						<Dropdown>
							<Text k={0.71}>プロジェクト</Text>
							<Caret />
						</Dropdown>
						<Text $left={10} k={0.77}>
							ルール:
						</Text>
						<Dropdown>
							<Text k={0.79}>すべてのルール</Text>
							<Caret />
						</Dropdown>
					</FilterRow>
					<TableRow $head>
						<Icon name="chevron" $size={8} $stroke={1.2} />
						<Text>コード</Text>
						<Text>名前</Text>
						<Text>説明</Text>
						<Text>ファイル</Text>
					</TableRow>
					<TableRow>
						<Icon name="warning" $size={9} $color="#c4821c" $stroke={1.6} />
						<Text>WARNING</Text>
						<Text k={0.7}>検証エラー</Text>
						<Text k={0.72}>[Excel ファイルを使用] アクティビティは [Excel プロセス スコープ] 内で使用することをお勧めします。</Text>
						<Text>Main.xaml</Text>
					</TableRow>
				</BottomPanel>
			</Centre>

			<Properties>
				<PanelHeader $plain>
					<Text k={0.79}>プロパティ</Text>
				</PanelHeader>
				<Banner>
					<Icon name="warning" $size={12} $color="#e08a1e" $stroke={1.4} />
					<BannerText>
						<Text k={0.68}>警告: [Excel ファイ</Text>
						<br />
						<Text k={0.7}>ルを使用] アクテ...</Text>
					</BannerText>
					<Icon name="copy" $size={12} $stroke={1.2} />
				</Banner>
				<TypeName>
					<Text $size={8.5}>UiPath.Excel.Activities.Bus...</Text>
				</TypeName>
				<Group $height={24} $top={5}>
					<Text $weight={600} $color={colors.dark} k={0.72}>
						オプション
					</Text>
					<Icon name="wide" $size={8} $stroke={2.1} $color={colors.dark} $turn={180} />
				</Group>
				{['Excel ファイルを開いたままにす', '読み取り専用', 'テンプレートを使用'].map(name => (
					<Prop key={name} $height={34.800}>
						<PropLabel>
							<Text k={0.75}>{name}</Text>
						</PropLabel>
						<ToggleRow>
							<Toggle />
							<Text k={0.77}>いいえ</Text>
						</ToggleRow>
					</Prop>
				))}
				<Prop $height={37.500}>
					<PropLabel>
						<Text k={0.78}>読み込む値の書式</Text>
					</PropLabel>
					<Choice italic>プロジェクトと同じ</Choice>
				</Prop>
				<Prop $height={37.500}>
					<PropLabel>
						<Text>ウィンドウ サイズの変更</Text>
					</PropLabel>
					<Choice>None</Choice>
				</Prop>
				<Prop $height={37.500}>
					<PropLabel>
						<Text>秘密度操作</Text>
					</PropLabel>
					<Choice>何もしない</Choice>
				</Prop>
				<Prop $height={37.500}>
					<PropLabel>
						<Text>秘密度ラベル</Text>
					</PropLabel>
					<VbInput />
				</Prop>
				<Group $height={18}>
					<Text $weight={600} $color={colors.dark} k={0.7}>
						ファイル
					</Text>
					<Icon name="wide" $size={8} $stroke={2.1} $color={colors.dark} $turn={180} />
				</Group>
				<Prop $height={38.500}>
					<PropLabel>
						<Text>パスワード</Text>
						<Text $color={B} k={0.7}>
							セキュリティで保護...
						</Text>
					</PropLabel>
					<VbInput />
				</Prop>
				<Prop $height={39}>
					<PropLabel>
						<Text>編集用パスワード</Text>
						<Text $color={B} k={0.68} $left={-2}>
							セキュリティ...
						</Text>
					</PropLabel>
					<VbInput />
				</Prop>
			</Properties>

			<Rail $width={22} $side="left">
				<RailItem $active>
					<Icon name="wrench" $size={12} $color={colors.blue} $stroke={1.7} />
				</RailItem>
				{['sparkles', 'lab', 'list', 'widgets', 'chart'].map(name => (
					<RailItem key={name}>
						<Icon name={name} $size={13} $color="#4a5157" />
					</RailItem>
				))}
			</Rail>
		</Body>
	</Window>
)

export default App
